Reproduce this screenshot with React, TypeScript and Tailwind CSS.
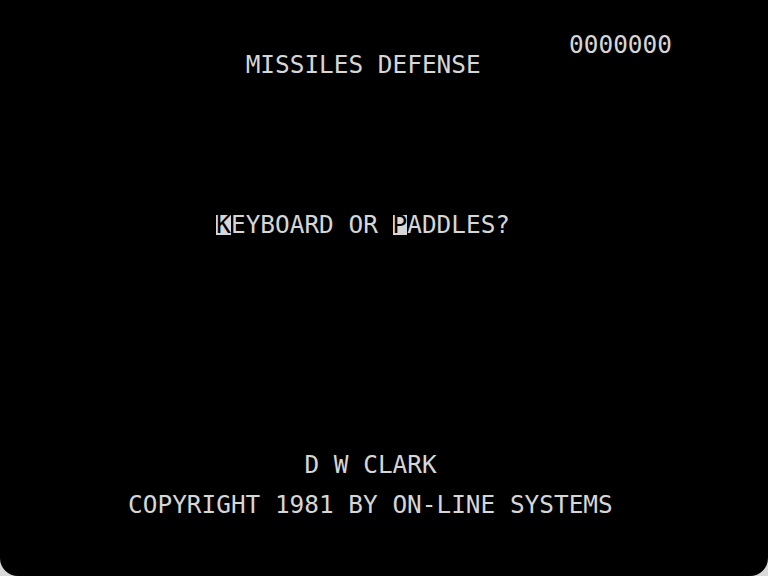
import React from 'react';

// Apple II text screen: 40 columns x 24 rows, each cell 14.7 x 20 px
type Seg = { text: string; inverse?: boolean };
type Line = { indent: string; segs: Seg[] };

const LINES: Record<number, Line> = {
  0: { indent: 'pl-[485.1px]', segs: [{ text: '0000000' }] },
  1: { indent: 'pl-[161.7px]', segs: [{ text: 'MISSILES DEFENSE' }] },
  9: {
    indent: 'pl-[132.3px]',
    segs: [
      { text: 'K', inverse: true },
      { text: 'EYBOARD OR ' },
      { text: 'P', inverse: true },
      { text: 'ADDLES?' },
    ],
  },
  21: { indent: 'pl-[220.5px]', segs: [{ text: 'D W CLARK' }] },
  23: { indent: 'pl-[44.1px]', segs: [{ text: 'COPYRIGHT 1981 BY ON-LINE SYSTEMS' }] },
};

export default function App() {
  const rows = Array.from({ length: 24 }, (_, i) => i);

  return (
    <div className="w-[768px] h-[576px] bg-[#d9d9d9]">
      <div className="w-full h-full bg-black rounded-b-[18px] overflow-hidden pt-[35px] pl-[84px]">
        <div
          className="flex flex-col w-[588px] text-[24.4px] leading-[20px] text-[#d6d6d6]"
          style={{ fontFamily: '"DejaVu Sans Mono", "Liberation Mono", monospace' }}
        >
          {rows.map((r) => {
            const line = LINES[r];
            if (!line) return <div key={r} className="h-[20px]" />;
            return (
              <div key={r} className={`h-[20px] whitespace-pre flex ${line.indent}`}>
                {line.segs.map((seg, j) =>
                  seg.inverse ? (
                    <span key={j} className="inline-block h-[20px] w-[14.7px] bg-[#d6d6d6] text-black">
                      {seg.text}
                    </span>
                  ) : (
                    <span key={j} className="h-[20px] overflow-visible">
                      {seg.text}
                    </span>
                  )
                )}
              </div>
            );
          })}
        </div>
      </div>
    </div>
  );
}
